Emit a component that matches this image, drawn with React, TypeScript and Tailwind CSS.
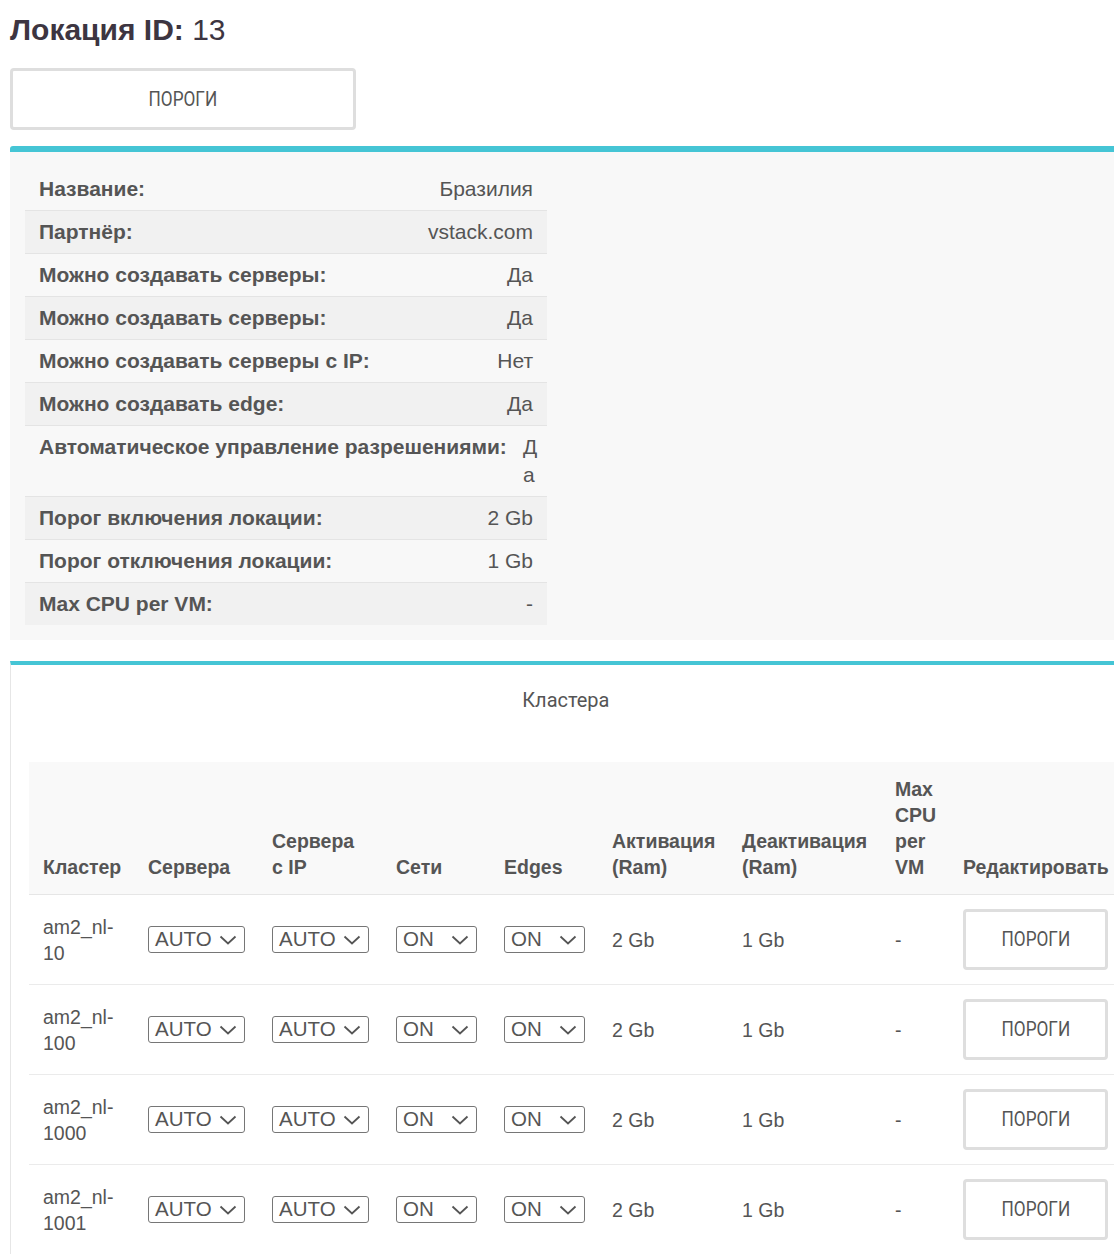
import React from 'react'

const info = [
  { label: 'Название:', value: 'Бразилия' },
  { label: 'Партнёр:', value: 'vstack.com' },
  { label: 'Можно создавать серверы:', value: 'Да' },
  { label: 'Можно создавать серверы:', value: 'Да' },
  { label: 'Можно создавать серверы с IP:', value: 'Нет' },
  { label: 'Можно создавать edge:', value: 'Да' },
  { label: 'Автоматическое управление разрешениями:', value: 'Да' },
  { label: 'Порог включения локации:', value: '2 Gb' },
  { label: 'Порог отключения локации:', value: '1 Gb' },
  { label: 'Max CPU per VM:', value: '-' },
]

const clusters = ['am2_nl-10', 'am2_nl-100', 'am2_nl-1000', 'am2_nl-1001']

const Chevron = () => (
  <svg width="18" height="10" viewBox="0 0 18 10" fill="none" className="shrink-0">
    <path d="M1.5 1.5 L9 8.5 L16.5 1.5" stroke="#555" strokeWidth="1.8" />
  </svg>
)

function FakeSelect({ value, wide }: { value: string; wide?: boolean }) {
  return (
    <div
      className={`flex items-center h-[27px] border border-[#767676] rounded-[3px] pl-[6px] pr-[7px] bg-white text-[20.5px] leading-none text-[#555] ${wide ? 'w-[97px]' : 'w-[81px]'}`}
    >
      <span>{value}</span>
      <span className="ml-auto">
        <Chevron />
      </span>
    </div>
  )
}

function PorogiButton({ className }: { className: string }) {
  return (
    <button
      className={`bg-white border-[3px] border-[#dedede] rounded-[4px] text-[#555] font-['Roboto',sans-serif] ${className}`}
    >
      <span className="inline-block text-[20px] scale-x-[0.86]">ПОРОГИ</span>
    </button>
  )
}

export default function App() {
  return (
    <div className="w-full overflow-hidden bg-white font-['Liberation_Sans',Arial,sans-serif] text-[#555] pl-[10px] pb-[20px]">
      <h1 className="pt-[10px] leading-[40px] text-[30px] text-[#3d3541]">
        <span className="font-bold">Локация ID:</span> 13
      </h1>

      <PorogiButton className="mt-[18px] w-[346px] h-[62px]" />

      {/* Location info */}
      <div className="mt-[16px] w-[1110px] border-t-[6px] border-[#45c5d5] rounded-tl-[3px] bg-[#f8f8f8] p-[15px]">
        <div className="w-[522px]">
          {info.map((row, i) => (
            <div
              key={i}
              className={`flex items-start border-t py-[7px] text-[21px] leading-[28px] ${i === 0 ? 'border-transparent' : 'border-[#e4e4e4]'} ${i % 2 === 1 ? 'bg-[#f1f1f1]' : ''}`}
            >
              <div className="shrink-0 whitespace-nowrap font-bold pl-[14px] pr-[16px]">{row.label}</div>
              <div className="flex-1 min-w-0 text-right break-all pr-[14px]">{row.value}</div>
            </div>
          ))}
        </div>
      </div>

      {/* Clusters */}
      <div className="mt-[21px] w-[1110px] border-t-[4px] border-t-[#45c5d5] border-l border-l-[#e6e6e6] bg-white pt-[20px]">
        <div className="text-center font-['Roboto',sans-serif] leading-[30px] text-[#555] mb-[45px]">
          <span className="inline-block text-[21px] scale-x-[0.95]">Кластера</span>
        </div>

        <div className="pl-[18px]">
          <table className="table-fixed w-[1093px] border-collapse text-[19.5px] text-[#555]">
            <colgroup>
              <col className="w-[105px]" />
              <col className="w-[124px]" />
              <col className="w-[124px]" />
              <col className="w-[108px]" />
              <col className="w-[108px]" />
              <col className="w-[130px]" />
              <col className="w-[153px]" />
              <col className="w-[68px]" />
              <col className="w-[173px]" />
            </colgroup>
            <thead>
              <tr className="bg-[#f9f9f9] border-b border-[#e6e6e6]">
                {['Кластер', 'Сервера', 'Сервера с IP', 'Сети', 'Edges', 'Активация (Ram)', 'Деактивация (Ram)', 'Max CPU per VM', 'Редактировать'].map((h) => (
                  <th key={h} className="align-bottom text-left font-bold leading-[26px] px-[14px] py-[14px]">
                    {h}
                  </th>
                ))}
              </tr>
            </thead>
            <tbody>
              {clusters.map((c) => (
                <tr key={c} className="border-t border-[#ebebeb]">
                  <td className="align-middle leading-[26px] px-[14px] py-[14px]">{c}</td>
                  <td className="align-middle px-[14px]"><FakeSelect value="AUTO" wide /></td>
                  <td className="align-middle px-[14px]"><FakeSelect value="AUTO" wide /></td>
                  <td className="align-middle px-[14px]"><FakeSelect value="ON" /></td>
                  <td className="align-middle px-[14px]"><FakeSelect value="ON" /></td>
                  <td className="align-middle leading-[26px] px-[14px]">2 Gb</td>
                  <td className="align-middle leading-[26px] px-[14px]">1 Gb</td>
                  <td className="align-middle leading-[26px] px-[14px]">-</td>
                  <td className="align-middle px-[14px] py-[14px]">
                    <PorogiButton className="w-[145px] h-[61px] block" />
                  </td>
                </tr>
              ))}
            </tbody>
          </table>
        </div>
      </div>
    </div>
  )
}
